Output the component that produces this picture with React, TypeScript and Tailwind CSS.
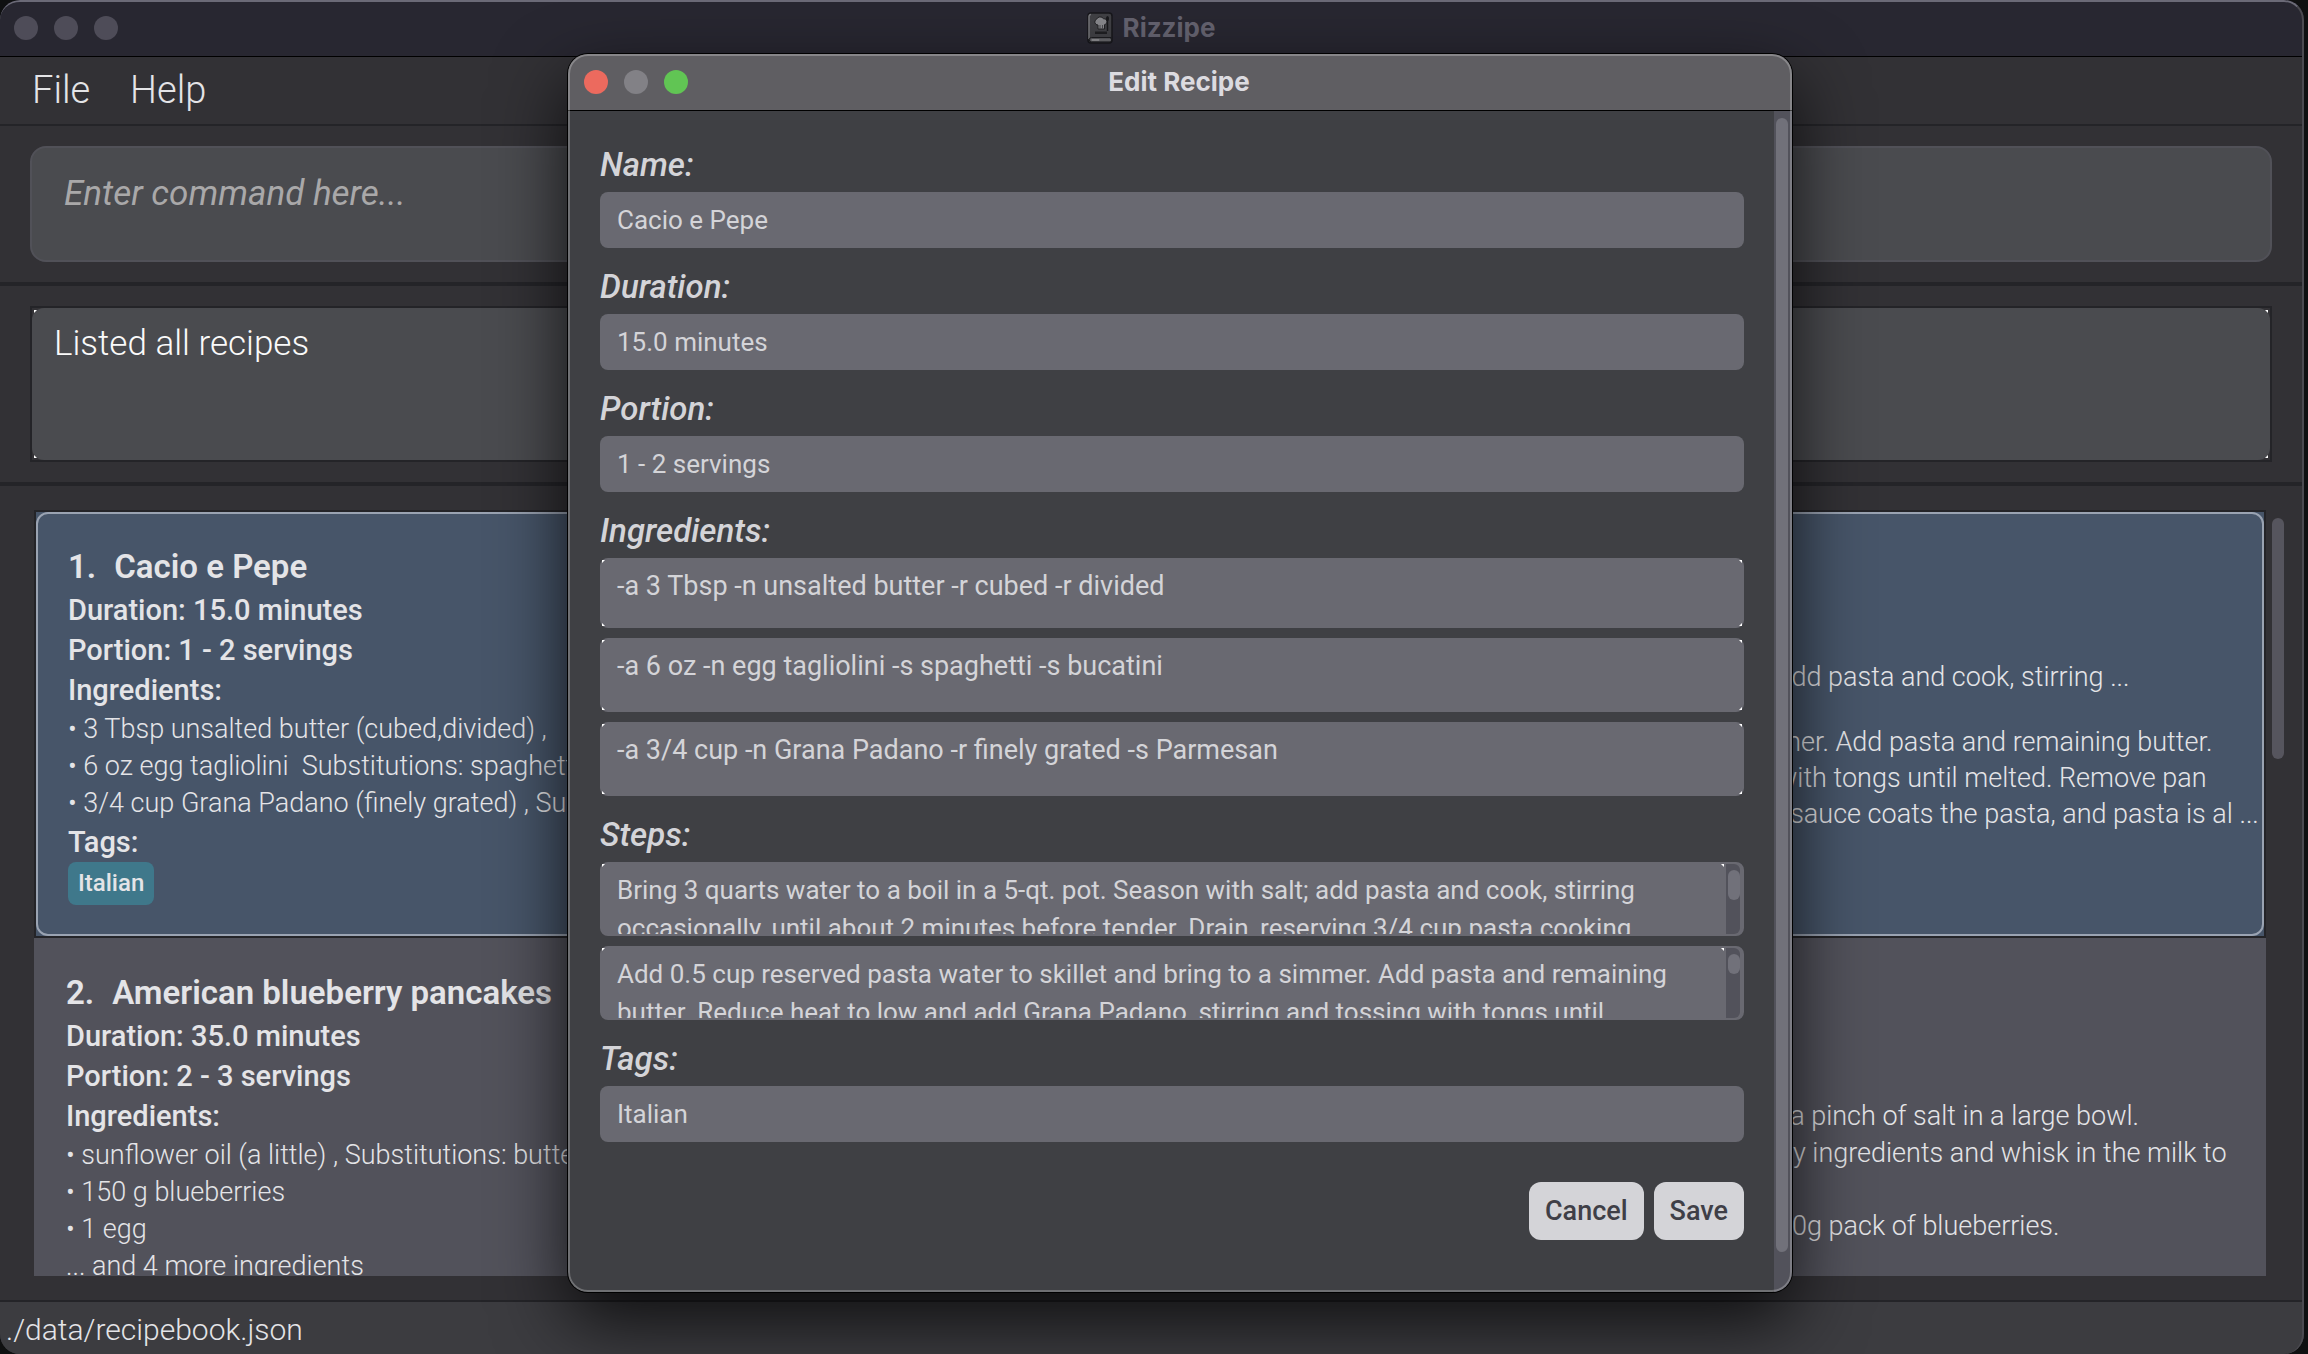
import React from "react";

const STEP_ONE =
  "Bring 3 quarts water to a boil in a 5-qt. pot. Season with salt; add pasta and cook, stirring\noccasionally, until about 2 minutes before tender. Drain, reserving 3/4 cup pasta cooking";
const STEP_TWO =
  "Add 0.5 cup reserved pasta water to skillet and bring to a simmer. Add pasta and remaining\nbutter. Reduce heat to low and add Grana Padano, stirring and tossing with tongs until";

function BookIcon() {
  return (
    <svg width="26" height="32" viewBox="0 0 26 32" aria-hidden="true">
      <rect x="1" y="1" width="24" height="30" rx="3" fill="#414145" stroke="#17171b" strokeWidth="1.5" />
      <path d="M4 2.500a2 2 0 0 0-2 2V27" fill="none" stroke="#77777b" strokeWidth="1.5" />
      <path d="M4.500 25.500H24v4.500H4.500a2.200 2.200 0 0 1 0-4.500z" fill="#57575b" stroke="#1d1d20" />
      <path d="M4.500 28h8" stroke="#8d8d90" strokeWidth="2" />
      <path d="M12.500 28H24" stroke="#6c6c70" strokeWidth="1.5" />
      <path d="M11 17v-4a3 3 0 0 1-1.500-5.700a4 4 0 0 1 7-.6a3 3 0 0 1 1 6V17z" fill="#88888c" stroke="#222225" />
      <path d="M13 13v4M15.500 13v4" stroke="#4a4a4e" />
      <path d="M20.500 5v14" stroke="#19191c" strokeWidth="1.500" />
      <ellipse cx="20.500" cy="6.500" rx="1.500" ry="2.500" fill="#19191c" />
      <path d="M8 19.500h12v2.500H8z" fill="#1f1f22" />
    </svg>
  );
}

function Corners({ scroll = false }: { scroll?: boolean }) {
  return (
    <>
      <span className="absolute left-0.5 top-0.5 size-[3px] bg-white [clip-path:polygon(0_0,100%_0,0_100%)]" />
      <span
        className={
          scroll
            ? "absolute right-5 top-0.5 size-[3px] bg-white [clip-path:polygon(0_0,100%_0,100%_100%)]"
            : "absolute right-0.5 top-0.5 size-[3px] bg-white [clip-path:polygon(0_0,100%_0,100%_100%)]"
        }
      />
      {!scroll && (
        <>
          <span className="absolute bottom-0.5 left-0.5 size-[3px] bg-white [clip-path:polygon(0_0,100%_100%,0_100%)]" />
          <span className="absolute bottom-0.5 right-0.5 size-[3px] bg-white [clip-path:polygon(100%_0,100%_100%,0_100%)]" />
        </>
      )}
    </>
  );
}

function Label({ htmlFor, children }: { htmlFor: string; children: React.ReactNode }) {
  return (
    <label htmlFor={htmlFor} className="block pb-1 pt-4 text-[33px] font-medium italic leading-[46px] text-zinc-300">
      {children}
    </label>
  );
}

function TextField({ id, label, value }: { id: string; label: string; value: string }) {
  return (
    <div>
      <Label htmlFor={id}>{label}</Label>
      <input
        id={id}
        defaultValue={value}
        className="block h-14 w-full rounded-lg bg-[#696971] px-[17px] text-[26px] text-zinc-300 outline-none"
      />
    </div>
  );
}

function Area({
  id,
  label,
  value,
  size,
  short = false,
  thumb,
}: {
  id?: string;
  label: string;
  value: string;
  size: string;
  short?: boolean;
  thumb?: string;
}) {
  return (
    <div className={short ? "relative h-[70px]" : "relative h-[74px]"}>
      <textarea
        id={id}
        aria-label={label}
        defaultValue={value}
        wrap="off"
        className={`block size-full resize-none overflow-hidden rounded-lg border-2 border-[#696971] bg-[#696971] px-[15px] pt-[7px] leading-[38px] text-zinc-300 outline-none ${size}`}
      />
      <Corners scroll={!!thumb} />
      {thumb && (
        <div className="absolute bottom-0.5 right-1 top-0.5 w-3.5 rounded-r-md bg-[#52525b] pl-0.5 pt-1.5">
          <div className={thumb} />
        </div>
      )}
    </div>
  );
}

function EditDialog() {
  return (
    <section
      role="dialog"
      aria-label="Edit Recipe"
      className="absolute left-[568px] right-[516px] top-[54px] overflow-hidden rounded-[20px] bg-[#3f4044] shadow-[0_0_0_1px_#000,0_28px_72px_rgba(0,0,0,0.78)]"
    >
      <header className="relative flex h-[57px] items-center justify-center border-b border-black bg-[#5f5e62]">
        <div className="absolute left-4 flex gap-4">
          <button aria-label="Close" className="size-6 rounded-full bg-[#ec6a5e]" />
          <button aria-label="Minimize" className="size-6 rounded-full bg-[#828186]" />
          <button aria-label="Zoom" className="size-6 rounded-full bg-[#61c554]" />
        </div>
        <h2 className="pr-0.5 font-['Inter',sans-serif] text-[26px] font-bold leading-8 text-[#dcdbe0]">Edit Recipe</h2>
      </header>
      <div className="flex">
        <form className="min-w-0 flex-1 pb-[52px] pl-8 pr-[30px] pt-[15px]" onSubmit={(e) => e.preventDefault()}>
          <TextField id="name" label="Name:" value="Cacio e Pepe" />
          <TextField id="duration" label="Duration:" value="15.0 minutes" />
          <TextField id="portion" label="Portion:" value="1 - 2 servings" />
          <Label htmlFor="ingredient-1">Ingredients:</Label>
          <div className="flex flex-col gap-2.5">
            <Area
              id="ingredient-1"
              label="Ingredient 1"
              value="-a 3 Tbsp -n unsalted butter -r cubed -r divided"
              size="text-[27px]"
              short
            />
            <Area label="Ingredient 2" value="-a 6 oz -n egg tagliolini -s spaghetti -s bucatini" size="text-[27px]" />
            <Area label="Ingredient 3" value="-a 3/4 cup -n Grana Padano -r finely grated -s Parmesan" size="text-[27px]" />
          </div>
          <Label htmlFor="step-1">Steps:</Label>
          <div className="flex flex-col gap-2.5">
            <Area id="step-1" label="Step 1" value={STEP_ONE} size="text-[26px]" thumb="h-[30px] w-3 rounded-full bg-[#71717a]" />
            <Area label="Step 2" value={STEP_TWO} size="text-[26px]" thumb="h-5 w-3 rounded-full bg-[#71717a]" />
          </div>
          <TextField id="tags" label="Tags:" value="Italian" />
          <div className="mt-10 flex justify-end gap-2.5">
            <button className="h-[58px] rounded-xl bg-zinc-300 px-4 text-[27px] font-medium text-zinc-700">Cancel</button>
            <button className="h-[58px] rounded-xl bg-zinc-300 px-4 text-[27px] font-medium text-zinc-700">Save</button>
          </div>
        </form>
        <div className="w-[18px] bg-[#52525b] pb-10 pl-0.5 pr-1 pt-[7px]">
          <div className="h-full rounded-full bg-[#71717a]" />
        </div>
      </div>
      <div className="pointer-events-none absolute inset-0 rounded-[20px] border-2 border-white/25" />
    </section>
  );
}

type Recipe = {
  title: string;
  number: string;
  duration: string;
  portion: string;
  ingredients: string[];
};

function RecipeDetails({ recipe, children }: { recipe: Recipe; children?: React.ReactNode }) {
  return (
    <div className="flex flex-col items-start whitespace-pre">
      <h3 className="flex gap-[18px] pb-0.5 text-[33px] font-semibold leading-[42px]">
        <span>{recipe.number}</span>
        <span>{recipe.title}</span>
      </h3>
      <p className="text-[29px] font-medium leading-10">{recipe.duration}</p>
      <p className="text-[29px] font-medium leading-10">{recipe.portion}</p>
      <p className="text-[29px] font-medium leading-10">Ingredients:</p>
      <ul className="pt-px">
        {recipe.ingredients.map((line) => (
          <li key={line} className="text-[27px] font-light leading-[37px]">
            {line}
          </li>
        ))}
      </ul>
      {children}
    </div>
  );
}

const CACIO: Recipe = {
  number: "1.",
  title: "Cacio e Pepe",
  duration: "Duration: 15.0 minutes",
  portion: "Portion: 1 - 2 servings",
  ingredients: [
    "• 3 Tbsp unsalted butter (cubed,divided) ,",
    "• 6 oz egg tagliolini  Substitutions: spaghetti",
    "• 3/4 cup Grana Padano (finely grated) , Sub",
  ],
};

const PANCAKES: Recipe = {
  number: "2.",
  title: "American blueberry pancakes",
  duration: "Duration: 35.0 minutes",
  portion: "Portion: 2 - 3 servings",
  ingredients: [
    "• sunflower oil (a little) , Substitutions: butter",
    "• 150 g blueberries",
    "• 1 egg",
    "... and 4 more ingredients",
  ],
};

export default function App() {
  return (
    <div className="relative h-screen min-h-[1354px] overflow-hidden bg-[#0f1011] pr-1 font-['Roboto','Noto_Sans',sans-serif] text-zinc-200">
      <main className="relative flex h-full flex-col overflow-hidden rounded-[20px] bg-[#323135]">
        <header className="flex h-[57px] shrink-0 items-center border-b border-black bg-[#282731] pl-3.5">
          <div className="flex flex-1 gap-4">
            <button aria-label="Close window" className="size-6 rounded-full bg-[#4e4c58]" />
            <button aria-label="Minimize window" className="size-6 rounded-full bg-[#4e4c58]" />
            <button aria-label="Zoom window" className="size-6 rounded-full bg-[#4e4c58]" />
          </div>
          <h1 className="flex items-center gap-2.5 font-['Inter',sans-serif] text-[26px] font-bold leading-8 text-[#656370]">
            <BookIcon />
            Rizzipe
          </h1>
          <div className="flex-1 pr-4" />
        </header>
        <nav className="flex h-[69px] shrink-0 items-center gap-10 border-b-2 border-[#242428] pl-8 text-[38px] font-light">
          <button>File</button>
          <button>Help</button>
        </nav>
        <div className="h-[160px] shrink-0 border-b-4 border-[#242428] py-5 pl-[30px] pr-8">
          <div className="h-full rounded-2xl border-2 border-[#515158] bg-[#4a4b4f] px-8 pt-5">
            <input
              aria-label="Command"
              placeholder="Enter command here..."
              className="block w-full bg-transparent text-[35px] italic leading-[52px] outline-none placeholder:text-[#a9a8a9]"
            />
          </div>
        </div>
        <div className="h-[200px] shrink-0 border-b-4 border-[#242428] py-5 pl-[30px] pr-8">
          <div className="relative h-full border-2 border-[#242428]">
            <textarea
              aria-label="Result"
              readOnly
              defaultValue="Listed all recipes"
              className="block size-full resize-none rounded-xl bg-[#4a4b4f] px-[22px] pt-[11px] text-[35px] font-light leading-[50px] text-zinc-50 outline-none"
            />
            <Corners />
          </div>
        </div>
        <div className="flex min-h-0 flex-1 gap-1.5 border-b-2 border-[#242428] pb-6 pl-[34px] pr-5 pt-6">
          <div className="min-w-0 flex-1 overflow-hidden bg-[#52525b]">
            <article className="border-2 border-[#242428] bg-[#475569]">
              <div className="flex h-[424px] rounded-xl border-2 border-[#9aa3b2] pl-[30px] pr-1 pt-8">
                <div className="w-[1709px] shrink-0">
                  <RecipeDetails recipe={CACIO}>
                    <p className="text-[29px] font-medium leading-10">Tags:</p>
                    <span className="rounded-lg bg-[#3f788b] px-2.5 text-[24px] font-medium leading-[43px]">Italian</span>
                  </RecipeDetails>
                </div>
                <ol className="whitespace-pre pt-[113px] text-[27px] font-light leading-9">
                  <li>add pasta and cook, stirring ...</li>
                  <li className="pt-[29px]">
                    {"mer. Add pasta and remaining butter.\nwith tongs until melted. Remove pan\n  sauce coats the pasta, and pasta is al ..."}
                  </li>
                </ol>
              </div>
            </article>
            <article className="flex pl-8 pt-[34px]">
              <div className="w-[1711px] shrink-0">
                <RecipeDetails recipe={PANCAKES} />
              </div>
              <ol className="whitespace-pre pt-[126px] text-[27px] font-light leading-[37px]">
                <li>{"  a pinch of salt in a large bowl."}</li>
                <li className="pb-9">{" ry ingredients and whisk in the milk to"}</li>
                <li>50g pack of blueberries.</li>
              </ol>
            </article>
          </div>
          <div className="w-3 pt-2">
            <div className="h-[241px] rounded-full bg-[#56555e]" />
          </div>
        </div>
        <footer className="flex h-[52px] shrink-0 items-center bg-[#3c3c40] px-1.5 pt-0.5 text-[30px] font-light">
          ./data/recipebook.json
        </footer>
        <div className="pointer-events-none absolute inset-0 rounded-[20px] border-r-2 border-t-2 border-r-[#4b4a50] border-t-[#6b6a77]" />
      </main>
      <EditDialog />
    </div>
  );
}
